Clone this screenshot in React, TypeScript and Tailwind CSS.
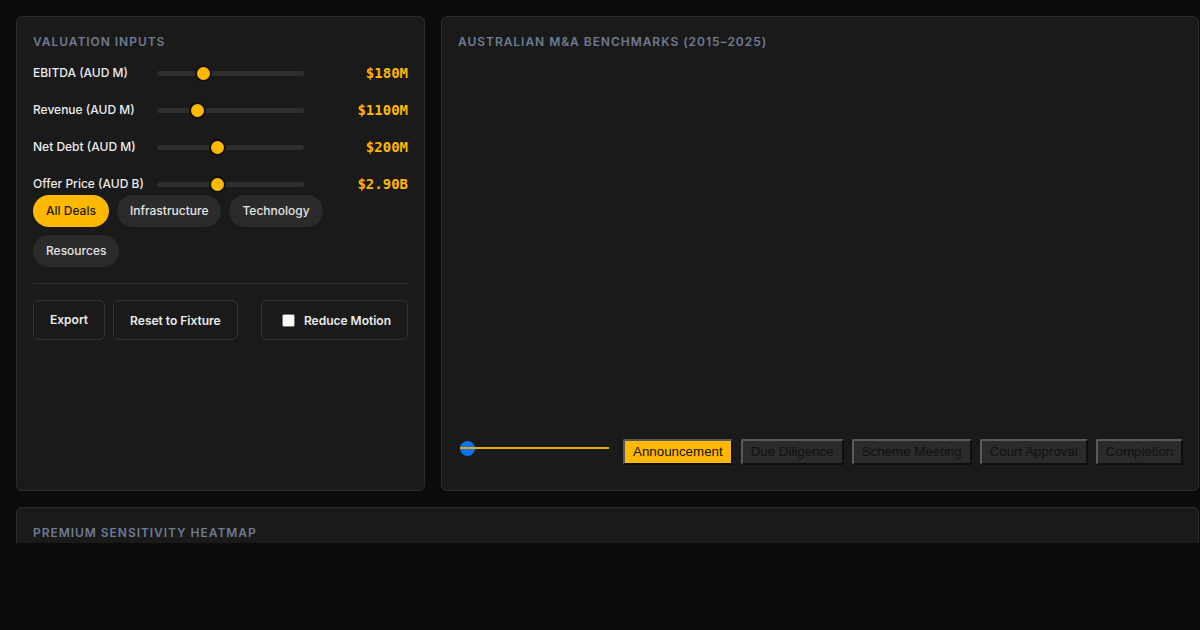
import React, { useState } from 'react'

const SLIDERS = [
  { label: 'EBITDA (AUD M)', value: '$180M', pos: 0.31 },
  { label: 'Revenue (AUD M)', value: '$1100M', pos: 0.27 },
  { label: 'Net Debt (AUD M)', value: '$200M', pos: 0.41 },
  { label: 'Offer Price (AUD B)', value: '$2.90B', pos: 0.41 },
]

const SECTORS = ['All Deals', 'Infrastructure', 'Technology', 'Resources']
const STAGES = ['Announcement', 'Due Diligence', 'Scheme Meeting', 'Court Approval', 'Completion']

const titleCls =
  'text-[12px] leading-[16px] font-semibold uppercase tracking-[0.08em] text-[#6e7c91]'

function Slider({ pos }: { pos: number }) {
  return (
    <div className="relative w-[147px] h-4 flex items-center">
      <div className="w-full h-[5px] rounded-full bg-[#2e2e2e]" />
      <div
        className="absolute w-[17px] h-[17px] rounded-full bg-[#ffb800] border-2 border-[#111]"
        style={{ left: `calc(${pos * 100}% - 8px)` }}
      />
    </div>
  )
}

export default function App() {
  const [sector, setSector] = useState('All Deals')
  const [stage, setStage] = useState('Announcement')
  const [reduce, setReduce] = useState(false)

  return (
    <div
      className="min-h-screen bg-[#0c0c0c]"
      style={{ fontFamily: 'Inter, "Noto Sans", sans-serif' }}
    >
      <div className="h-[543px] overflow-hidden">
        <div className="flex flex-col gap-4 pl-4 pt-4 pr-px">
          <div className="flex gap-4">
            {/* Valuation inputs */}
            <div className="w-[409px] h-[475px] shrink-0 rounded-md border border-[#2c2c2c] bg-[#1a1a1a] p-4">
              <h2 className={`${titleCls} mt-px`}>Valuation Inputs</h2>
              <div className="mt-[12px] flex flex-col gap-[15px]">
                {SLIDERS.map(s => (
                  <div key={s.label} className="flex items-center h-[22px]">
                    <span className="w-[124px] text-[12px] font-medium text-[#ececec] whitespace-nowrap">
                      {s.label}
                    </span>
                    <Slider pos={s.pos} />
                    <span
                      className="flex-1 text-right text-[14px] font-bold text-[#ffb800]"
                      style={{ fontFamily: '"DejaVu Sans Mono", "Liberation Mono", monospace' }}
                    >
                      {s.value}
                    </span>
                  </div>
                ))}
              </div>

              <div className="flex flex-wrap gap-2">
                {SECTORS.map(s => (
                  <button
                    key={s}
                    onClick={() => setSector(s)}
                    className={[
                      'h-8 px-[13px] rounded-full text-[12px] font-medium',
                      sector === s ? 'bg-[#ffb800] text-[#1a1a1a]' : 'bg-[#2b2b2b] text-[#e4e4e4]',
                    ].join(' ')}
                  >
                    {s}
                  </button>
                ))}
              </div>

              <div className="mt-4 border-t border-[#2e2e2e]" />

              <div className="mt-4 flex items-center gap-2">
                <button className="h-10 px-4 rounded-md border border-[#333] text-[12px] font-semibold text-[#ececec]">
                  Export
                </button>
                <button className="h-10 px-4 pt-px rounded-md border border-[#333] text-[12px] font-semibold text-[#ececec]">
                  Reset to Fixture
                </button>
                <button
                  onClick={() => setReduce(!reduce)}
                  className="ml-auto h-10 pl-5 pr-4 pt-px rounded-md border border-[#333] flex items-center gap-[9px] text-[12px] font-semibold text-[#ececec]"
                >
                  <span className="w-[13px] h-[13px] rounded-[2px] bg-white border border-[#767676]" />
                  Reduce Motion
                </button>
              </div>
            </div>

            {/* Benchmarks */}
            <div className="flex-1 min-w-0 h-[475px] rounded-md border border-[#2c2c2c] bg-[#1a1a1a] p-4 flex flex-col">
              <h2 className={`${titleCls} mt-px`}>Australian M&amp;A Benchmarks (2015–2025)</h2>
              <div className="flex-1" />
              <div className="mb-[9px] flex items-center">
                <div className="relative shrink-0 ml-0.5 w-[149px] h-4 -mt-[6px]">
                  <div className="absolute left-0 top-0 w-[15px] h-[15px] rounded-full bg-[#0a74f0]" />
                  <div className="absolute left-0 top-[6px] w-full h-[2px] bg-[#e6aa00]" />
                </div>
                <div className="ml-[14px] shrink-0 flex gap-2">
                  {STAGES.map(s => (
                    <button
                      key={s}
                      onClick={() => setStage(s)}
                      className={[
                        'h-[26px] px-2 shrink-0 whitespace-nowrap rounded-[2px] border-2 border-t-[#5a5a5a] border-l-[#5a5a5a] border-b-[#0e0e0e] border-r-[#0e0e0e] text-[13.33px] text-[#111]',
                        stage === s ? 'bg-[#ffb800]' : 'bg-[#2b2b2b]',
                      ].join(' ')}
                      style={{ fontFamily: '"Liberation Sans", Arial, sans-serif' }}
                    >
                      {s}
                    </button>
                  ))}
                </div>
              </div>
            </div>
          </div>

          {/* Heatmap */}
          <div className="h-[200px] rounded-md border border-[#2c2c2c] bg-[#1a1a1a] p-4">
            <h2 className={`${titleCls} mt-px`}>Premium Sensitivity Heatmap</h2>
          </div>
        </div>
      </div>
    </div>
  )
}
